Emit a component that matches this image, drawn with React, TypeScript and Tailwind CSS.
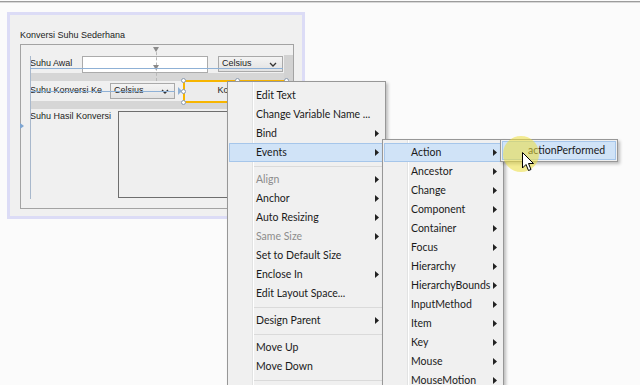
import { ReactNode } from "react";
import clsx from "clsx";

const menuFont = "font-['Lato',sans-serif] text-[10.5px] text-[#1a1a1a]";
const formFont = "font-['Liberation_Sans',Arial,sans-serif] text-[9px] text-[#222]";

function Arrow() {
  return (
    <svg width="4" height="7" viewBox="0 0 4 7" className="shrink-0">
      <path d="M0 0 L4 3.5 L0 7 Z" fill="#222" />
    </svg>
  );
}

function Combo({ width }: { width: string }) {
  return (
    <div
      className={clsx(
        "flex h-[16px] items-center justify-between border border-[#a9a9a9] bg-gradient-to-b from-[#f4f4f4] to-[#e2e2e2] pl-[3px] pr-[5px]",
        width
      )}
    >
      <span>Celsius</span>
      <svg width="8" height="5" viewBox="0 0 8 5">
        <path d="M1 1 L4 4 L7 1" stroke="#333" strokeWidth="1.3" fill="none" />
      </svg>
    </div>
  );
}

interface ItemProps {
  children: ReactNode;
  sub?: boolean;
  disabled?: boolean;
  active?: boolean;
  gutter: string;
}

function MenuItem({ children, sub, disabled, active, gutter }: ItemProps) {
  return (
    <div
      className={clsx(
        "mx-px flex h-[19px] items-center border pr-[4px]",
        active ? "border-[#a6c6ea] bg-[#d0e3f7]" : "border-transparent"
      )}
    >
      <div className={clsx("shrink-0", gutter)} />
      <span className={clsx("flex-1 whitespace-nowrap", disabled && "text-[#8c8c8c]")}>
        {children}
      </span>
      {sub ? <Arrow /> : null}
    </div>
  );
}

function Sep() {
  return (
    <div className="flex h-[8px] items-center pl-[26px] pr-[2px]">
      <div className="h-px flex-1 bg-[#dadada]" />
    </div>
  );
}

const mainItems: (string | [string, boolean?, boolean?])[] = [
  ["Edit Text"],
  ["Change Variable Name ..."],
  ["Bind", true],
  ["Events", true],
  "-",
  ["Align", true, true],
  ["Anchor", true],
  ["Auto Resizing", true],
  ["Same Size", true, true],
  ["Set to Default Size"],
  ["Enclose In", true],
  ["Edit Layout Space..."],
  "-",
  ["Design Parent", true],
  "-",
  ["Move Up"],
  ["Move Down"],
  "-",
];

const eventItems = [
  "Action",
  "Ancestor",
  "Change",
  "Component",
  "Container",
  "Focus",
  "Hierarchy",
  "HierarchyBounds",
  "InputMethod",
  "Item",
  "Key",
  "Mouse",
  "MouseMotion",
];

const handle = "absolute h-[5px] w-[5px] rounded-full border border-[#8c9bb0] bg-white";

export default function App() {
  return (
    <div className="relative h-[385px] w-[640px] overflow-hidden bg-[#fbfbfb]">
      <div className="mt-px h-px bg-[#9c9c9c]" />
      <div className="h-px bg-[#d8d8d8]" />

      {/* form frame */}
      <div
        className={clsx(
          "ml-[7px] mt-[9px] flex h-[207px] w-[298px] flex-col border-[3px] border-[#dcdcf6] bg-[#f0f0f0] pl-[10px] pt-[12px]",
          formFont
        )}
      >
        <div className="h-[16px] leading-[16px]">Konversi Suhu Sederhana</div>
        <div className="relative mt-[1px] h-[165px] w-[274px] border border-[#a3a3a3] pl-[9px] pt-[10px]">
          {/* designer guides */}
          <div className="absolute left-[9px] top-[11px] h-[143px] w-px bg-[#a8b8cc]" />
          <div className="absolute left-[-1px] top-[78px] h-0 w-0 border-y-[3px] border-l-[4px] border-y-transparent border-l-[#7fa6d2]" />
          <div className="absolute left-[135px] top-[2px] h-[34px] w-0 border-l border-dashed border-[#b8b8b8]" />
          <div className="absolute left-[132px] top-[2px] h-0 w-0 border-x-[3.5px] border-t-[5px] border-x-transparent border-t-[#8a8a8a]" />
          <div className="absolute left-[132px] top-[20px] h-0 w-0 border-x-[3.5px] border-t-[5px] border-x-transparent border-t-[#8a8a8a]" />
          <div className="absolute left-[9px] top-[23px] z-10 h-px w-[253px] bg-[#8fb1d6]" />
          <div className="absolute left-[9px] top-[46px] z-10 h-px w-[145px] bg-[#8fb1d6]" />

          <div className="flex h-[18px] items-center">
            <div className="w-[52px]">Suhu Awal</div>
            <div className="h-[17px] w-[126px] border border-[#ababab] bg-white" />
            <div className="ml-[10px]">
              <Combo width="w-[65px]" />
            </div>
            <div className="ml-auto h-[26px] w-[9px] self-start bg-[#d2d2d2]" />
          </div>
          <div className="h-[8px] bg-[#d6d6d6]" />

          <div className="flex h-[20px] items-center">
            <div className="w-[80px] whitespace-nowrap">Suhu Konversi Ke</div>
            <Combo width="w-[65px]" />
            <div className="ml-[3px] h-0 w-0 border-y-[4px] border-l-[4px] border-y-transparent border-l-[#8fb1d6]" />
            <div className="relative ml-[1px] -my-[3px] flex h-[23px] w-[104px] items-center justify-center border-2 border-[#f7b500] bg-[#ececec]">
              <span>Konversi</span>
              <div className={clsx(handle, "-left-[4px] -top-[4px]")} />
              <div className={clsx(handle, "-right-[4px] -top-[4px]")} />
              <div className={clsx(handle, "left-[50px] -top-[4px]")} />
              <div className={clsx(handle, "-left-[4px] -bottom-[4px]")} />
              <div className={clsx(handle, "-left-[4px] top-[7px]")} />
            </div>
          </div>
          <div className="h-[8px] bg-[#d6d6d6]" />

          <div className="flex">
            <div className="w-[88px] whitespace-nowrap pt-[1px]">Suhu Hasil Konversi</div>
            <div className="mt-[2px] h-[87px] w-[140px] border border-[#6e6e6e] bg-[#efefef]" />
          </div>
        </div>
      </div>

      {/* context menu */}
      <div
        className={clsx(
          "absolute left-[227px] top-[81px] h-[310px] w-[159px] border border-[#979797] bg-[#f0f0f0] pt-[4px] shadow-[2px_2px_3px_rgba(0,0,0,0.25)]",
          menuFont
        )}
      >
        <div className="absolute bottom-0 left-[24px] top-0 w-px bg-[#e2e3e3]" />
        <div className="absolute bottom-0 left-[25px] top-0 w-px bg-white" />
        <div className="relative">
          {mainItems.map((it, i) =>
            it === "-" ? (
              <Sep key={i} />
            ) : (
              <MenuItem
                key={i}
                sub={it[1]}
                disabled={it[2]}
                active={it[0] === "Events"}
                gutter="w-[26px]"
              >
                {it[0]}
              </MenuItem>
            )
          )}
        </div>
      </div>

      {/* events submenu */}
      <div
        className={clsx(
          "absolute left-[382px] top-[139px] h-[260px] w-[122px] border border-[#979797] bg-[#f0f0f0] pt-[3px] shadow-[2px_2px_3px_rgba(0,0,0,0.25)]",
          menuFont
        )}
      >
        <div className="absolute bottom-0 left-[24px] top-0 w-px bg-[#e2e3e3]" />
        <div className="absolute bottom-0 left-[25px] top-0 w-px bg-white" />
        <div className="relative">
          {eventItems.map((name) => (
            <MenuItem key={name} sub active={name === "Action"} gutter="w-[26px]">
              {name}
            </MenuItem>
          ))}
        </div>
      </div>

      {/* action submenu */}
      <div
        className={clsx(
          "absolute left-[500px] top-[139px] h-[23px] w-[118px] border border-[#979797] bg-[#f0f0f0] pt-[1px] shadow-[2px_2px_3px_rgba(0,0,0,0.25)]",
          menuFont
        )}
      >
        <MenuItem active gutter="w-[25px]">
          actionPerformed
        </MenuItem>
      </div>

      {/* cursor highlight + pointer */}
      <div className="absolute left-[503px] top-[136px] h-[36px] w-[36px] rounded-full bg-[rgba(236,222,60,0.55)]" />
      <svg
        className="absolute left-[522px] top-[152px]"
        width="13"
        height="20"
        viewBox="0 0 13 20"
      >
        <path
          d="M0.5 0.5 L0.5 16 L4 12.5 L6.5 18.5 L9 17.5 L6.5 11.5 L11.5 11.5 Z"
          fill="white"
          stroke="black"
          strokeWidth="1"
          strokeLinejoin="round"
        />
      </svg>
    </div>
  );
}
